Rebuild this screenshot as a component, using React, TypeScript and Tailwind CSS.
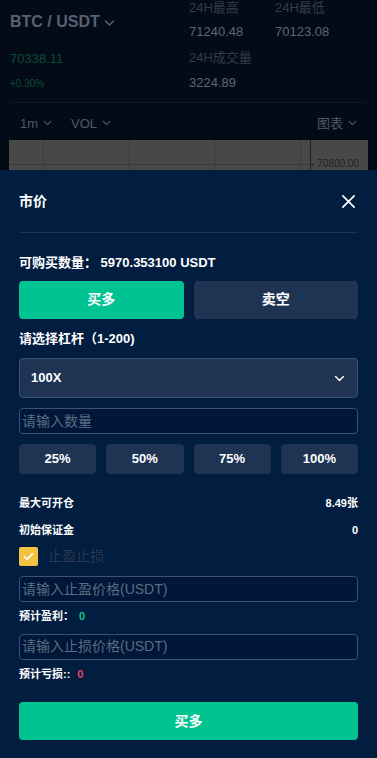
import React from 'react';

const font = { fontFamily: '"Liberation Sans", "Noto Sans CJK SC", sans-serif' };

const Chevron = ({ className = '' }: { className?: string }) => (
    <svg viewBox="0 0 12 8" className={className} fill="none" stroke="currentColor" strokeWidth="1.6" strokeLinecap="round" strokeLinejoin="round">
        <path d="M1.5 1.8 6 6.2l4.5-4.4" />
    </svg>
);

export default function App() {
    return (
        <div style={font} className="w-[377px] h-[758px] overflow-hidden bg-[#011d40] flex flex-col">
            {/* Dimmed page behind the sheet */}
            <div className="h-[170px] bg-[#030b17] flex flex-col shrink-0">
                <div className="flex px-[10px]">
                    <div className="w-[179px] flex flex-col">
                        <div className="flex items-center gap-[4px] mt-[10px] text-[16px] font-bold text-[#586170]">
                            BTC / USDT <Chevron className="w-[11px] h-[8px] mt-[2px]" />
                        </div>
                        <div className="mt-[15px] text-[13px] text-[#0c4b3c]">70338.11</div>
                        <div className="mt-[7px] text-[10px] text-[#0c4b3c]">+0.30%</div>
                    </div>
                    <div className="flex flex-col text-[13px] leading-[18px] -mt-[1px]">
                        <div className="flex">
                            <div className="w-[86px] flex flex-col">
                                <span className="text-[#333c48]">24H最高</span>
                                <span className="mt-[6px] text-[#5d6674]">71240.48</span>
                            </div>
                            <div className="flex flex-col">
                                <span className="text-[#333c48]">24H最低</span>
                                <span className="mt-[6px] text-[#5d6674]">70123.08</span>
                            </div>
                        </div>
                        <span className="mt-[8px] text-[#333c48]">24H成交量</span>
                        <span className="mt-[7px] text-[#5d6674]">3224.89</span>
                    </div>
                </div>
                <div className="mx-[11px] mt-[10px] h-px bg-[#0d1724]" />
                <div className="flex items-end pb-[7px] px-[20px] h-[37px] text-[13px] text-[#4f5865]">
                    <span className="flex items-center gap-[5px]">1m <Chevron className="w-[9px] h-[6px]" /></span>
                    <span className="flex items-center gap-[5px] ml-[19px]">VOL <Chevron className="w-[9px] h-[6px]" /></span>
                    <span className="flex items-center gap-[5px] ml-auto">图表 <Chevron className="w-[9px] h-[6px]" /></span>
                </div>
                <div className="relative mx-[9px] flex-1 bg-[#484848]">
                    <div className="absolute left-[34px] top-0 bottom-0 w-px bg-[#3b3b3b]" />
                    <div className="absolute left-[120px] top-0 bottom-0 w-px bg-[#3b3b3b]" />
                    <div className="absolute left-[205px] top-0 bottom-0 w-px bg-[#3b3b3b]" />
                    <div className="absolute left-[291px] top-0 bottom-0 w-px bg-[#3b3b3b]" />
                    <div className="absolute left-[301px] top-0 bottom-0 w-px bg-[#1e1e1e]" />
                    <div className="absolute left-0 right-[60px] top-[24px] h-px bg-[#3b3b3b]" />
                    <div className="absolute left-[301px] top-[24px] w-[4px] h-px bg-[#1e1e1e]" />
                    <span className="absolute right-[9px] top-[17px] text-[10px] leading-[14px] text-[#222]">70800.00</span>
                </div>
            </div>

            {/* Order sheet */}
            <div className="flex-1 flex flex-col px-[19px] bg-[#011d40]">
                <div className="flex items-center justify-between h-[62px]">
                    <span className="text-[14px] font-bold text-white">市价</span>
                    <svg viewBox="0 0 16 16" className="w-[15px] h-[15px] mr-[2px]" stroke="white" strokeWidth="1.8" strokeLinecap="round">
                        <path d="M2 2l12 12M14 2 2 14" />
                    </svg>
                </div>
                <div className="h-px bg-[#1a3458]" />
                <div className="mt-[20px] text-[13px] font-bold text-white">
                    可购买数量：&nbsp;5970.353100 USDT
                </div>
                <div className="mt-[8px] grid grid-cols-2 gap-[10px]">
                    <button className="h-[38px] rounded-[4px] bg-[#00c392] text-[14px] font-bold text-white">买多</button>
                    <button className="h-[38px] rounded-[4px] bg-[#1e3452] text-[14px] font-bold text-white">卖空</button>
                </div>
                <div className="mt-[10px] text-[13px] font-bold text-white">请选择杠杆（1-200)</div>
                <div className="mt-[10px] h-[40px] rounded-[4px] bg-[#1e3452] border border-[#3a5374] flex items-center justify-between px-[11px]">
                    <span className="text-[13px] font-bold text-white">100X</span>
                    <Chevron className="w-[11px] h-[7px] text-white mr-[1px]" />
                </div>
                <div className="mt-[10px] h-[26px] rounded-[4px] bg-[#00173a] border border-[#3a5374] flex items-center px-[2px]">
                    <span className="text-[14px] text-[#5c6c80]">请输入数量</span>
                </div>
                <div className="mt-[10px] grid grid-cols-4 gap-[10px]">
                    {['25%', '50%', '75%', '100%'].map(p => (
                        <button key={p} className="h-[30px] rounded-[4px] bg-[#1e3452] text-[13px] font-bold text-white">{p}</button>
                    ))}
                </div>
                <div className="mt-[21px] flex justify-between text-[11px] font-bold text-white">
                    <span>最大可开仓</span>
                    <span>8.49张</span>
                </div>
                <div className="mt-[10px] flex justify-between text-[11px] font-bold text-white">
                    <span>初始保证金</span>
                    <span>0</span>
                </div>
                <div className="mt-[8px] flex items-center gap-[10px]">
                    <div className="w-[19px] h-[19px] rounded-[2px] bg-[#f4c242] flex items-center justify-center">
                        <svg viewBox="0 0 12 10" className="w-[11px] h-[9px]" fill="none" stroke="white" strokeWidth="1.8" strokeLinecap="round" strokeLinejoin="round">
                            <path d="M1.5 5.2 4.6 8 10.5 1.8" />
                        </svg>
                    </div>
                    <span className="text-[14px] text-[#2b3a52]">止盈止损</span>
                </div>
                <div className="mt-[9px] h-[26px] rounded-[4px] bg-[#00173a] border border-[#3a5374] flex items-center px-[2px]">
                    <span className="text-[14px] text-[#5c6c80]">请输入止盈价格(USDT)</span>
                </div>
                <div className="mt-[6px] flex items-center text-[11px] font-bold text-white">
                    <span>预计盈利：</span>
                    <span className="ml-[5px] text-[#00c392]">0</span>
                </div>
                <div className="mt-[9px] h-[26px] rounded-[4px] bg-[#00173a] border border-[#3a5374] flex items-center px-[2px]">
                    <span className="text-[14px] text-[#5c6c80]">请输入止损价格(USDT)</span>
                </div>
                <div className="mt-[6px] flex items-center text-[11px] font-bold text-white">
                    <span>预计亏损::</span>
                    <span className="ml-[7px] text-[#e4475c]">0</span>
                </div>
                <button className="mt-[20px] h-[38px] rounded-[4px] bg-[#00c392] text-[14px] font-bold text-white">买多</button>
            </div>
        </div>
    );
}
